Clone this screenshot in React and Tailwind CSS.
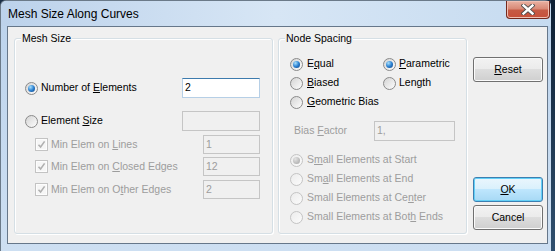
import React from "react";

function Radio({ checked, disabled }) {
  return (
    <span
      className={
        disabled
          ? "w-[13px] h-[13px] shrink-0 rounded-full border border-[#c4c4c4] bg-linear-to-br from-[#ececec] to-[#fbfbfb] flex items-center justify-center"
          : "w-[13px] h-[13px] shrink-0 rounded-full border border-[#8a8a8a] bg-linear-to-br from-[#d4d4d4] to-[#fdfdfd] flex items-center justify-center"
      }
    >
      {checked &&
        (disabled ? (
          <span className="w-[7px] h-[7px] rounded-full bg-radial-[at_35%_30%] from-[#e2e2e2] to-[#a3a3a3]" />
        ) : (
          <span className="w-[7px] h-[7px] rounded-full bg-radial-[at_35%_30%] from-[#a8e0fc] via-[#2d82d2] to-[#0b3c7c]" />
        ))}
    </span>
  );
}

function Check() {
  return (
    <span className="w-[13px] h-[13px] shrink-0 border border-[#c3c3c3] bg-[#f6f6f6] shadow-[inset_0_0_0_1px_#fdfdfd] flex items-center justify-center">
      <svg width="11" height="11" viewBox="0 0 11 11">
        <path d="M2.5 5.8 L4.6 8 L8.6 2.4" fill="none" stroke="#b0b0b0" strokeWidth="1.6" />
      </svg>
    </span>
  );
}

function Field({ value, disabled, w, h }) {
  return (
    <div
      className={
        disabled
          ? "shrink-0 border border-[#c5c5c5] bg-[#f0f0f0] text-[#9d9d9d] pl-[2px] flex items-center"
          : "shrink-0 border border-[#b6cfe6] border-t-[#3d7bad] bg-white text-black pl-[2px] flex items-center"
      }
      style={{ width: w, height: h }}
    >
      {value}
    </div>
  );
}

function Group({ label, className, children }) {
  return (
    <div className={"relative shrink-0 border border-[#d5dfe5] rounded-[3px] shadow-[inset_1px_1px_0_#fff,1px_1px_0_#fff] " + className}>
      <span className="absolute -top-[7px] left-[6px] px-[1px] bg-[#f0f0f0] leading-[13px]">{label}</span>
      {children}
    </div>
  );
}

function Button({ children, primary, className }) {
  return (
    <div
      className={
        (primary
          ? "border border-[#3c7fb1] bg-[linear-gradient(#eaf6fd_0%,#d9f0fc_49%,#bee6fd_50%,#a7d9f5_100%)] shadow-[inset_0_0_0_1px_#63d0f7] "
          : "border border-[#707070] bg-[linear-gradient(#f2f2f2_0%,#ebebeb_49%,#dddddd_50%,#cfcfcf_100%)] shadow-[inset_0_0_0_1px_#fbfbfb] ") +
        "w-[70px] h-[25px] rounded-[3px] flex items-center justify-center text-black " +
        className
      }
    >
      {children}
    </div>
  );
}

export default function App() {
  return (
    <div className="w-[555px] h-[251px] flex bg-[#1a2f47] overflow-hidden font-['Liberation_Sans',Arial,sans-serif] text-[10.5px] text-black">
      <div className="w-[551px] h-full flex flex-col border-l border-t border-[#6b7a89] rounded-tl-[6px] rounded-tr-[6px] bg-linear-to-b from-[#bcd3ec] to-[#cddff2]">
        {/* title bar */}
        <div className="h-[25px] flex items-start bg-linear-to-r from-[#bcd2eb] via-[#d7e6f5] to-[#c6dbf0] rounded-tl-[5px] rounded-tr-[5px]">
          <span className="pl-[7px] pt-[5px] text-[12px] leading-[16px]">Mesh Size Along Curves</span>
          <div className="ml-auto mr-[1px] w-[44px] h-[18px] rounded-b-[4px] border border-t-0 border-[#74291d] bg-[linear-gradient(#e9b2a3_0%,#d98a77_45%,#c65a44_55%,#c7503a_100%)] shadow-[inset_0_0_0_1px_#f0bfb2] flex items-center justify-center">
            <svg width="14" height="11" viewBox="0 0 14 11">
              <path d="M2.5 1.5 L11.5 9.5 M11.5 1.5 L2.5 9.5" stroke="#4a4a4a" strokeWidth="4.2" strokeLinecap="square" />
              <path d="M2.5 1.5 L11.5 9.5 M11.5 1.5 L2.5 9.5" stroke="#ffffff" strokeWidth="2.4" strokeLinecap="square" />
            </svg>
          </div>
        </div>

        {/* client area */}
        <div className="ml-[6px] w-[541px] h-[218px] border border-[#66778a] bg-[#f0f0f0] flex items-start pl-[6px] pt-[11px]">
          <Group label="Mesh Size" className="w-[259px] h-[196px] flex flex-col pt-[39px]">
            <div className="h-[20px] flex items-center pl-[10px]">
              <Radio checked />
              <span className="ml-[3px] w-[141px]">
                Number of <u>E</u>lements
              </span>
              <Field value="2" w={78} h={20} />
            </div>
            <div className="mt-[13px] h-[20px] flex items-center pl-[10px]">
              <Radio />
              <span className="ml-[3px] w-[141px]">
                Element <u>S</u>ize
              </span>
              <Field value="" disabled w={78} h={20} />
            </div>
            <div className="mt-[4px] h-[19px] flex items-center pl-[20px] text-[#9d9d9d]">
              <Check />
              <span className="ml-[3px] w-[152px]">
                Min Elem on <u>L</u>ines
              </span>
              <Field value="1" disabled w={57} h={19} />
            </div>
            <div className="mt-[3px] h-[19px] flex items-center pl-[20px] text-[#9d9d9d]">
              <Check />
              <span className="ml-[3px] w-[152px]">
                Min Elem on <u>C</u>losed Edges
              </span>
              <Field value="12" disabled w={57} h={19} />
            </div>
            <div className="mt-[4px] h-[19px] flex items-center pl-[20px] text-[#9d9d9d]">
              <Check />
              <span className="ml-[3px] w-[152px]">
                Min Elem on O<u>t</u>her Edges
              </span>
              <Field value="2" disabled w={57} h={19} />
            </div>
          </Group>

          <Group label="Node Spacing" className="ml-[5px] w-[189px] h-[196px] flex flex-col pt-[17px]">
            <div className="h-[16px] flex items-center pl-[11px]">
              <div className="w-[93px] flex items-center">
                <Radio checked />
                <span className="ml-[4px]">
                  E<u>q</u>ual
                </span>
              </div>
              <Radio checked />
              <span className="ml-[3px]">
                <u>P</u>arametric
              </span>
            </div>
            <div className="mt-[3px] h-[16px] flex items-center pl-[11px]">
              <div className="w-[93px] flex items-center">
                <Radio />
                <span className="ml-[4px]">
                  <u>B</u>iased
                </span>
              </div>
              <Radio />
              <span className="ml-[3px]">Length</span>
            </div>
            <div className="mt-[3px] h-[16px] flex items-center pl-[11px]">
              <Radio />
              <span className="ml-[4px]">
                <u>G</u>eometric Bias
              </span>
            </div>
            <div className="mt-[11px] h-[20px] flex items-center pl-[15px] text-[#9d9d9d]">
              <span className="w-[80px]">
                Bias <u>F</u>actor
              </span>
              <Field value="1," disabled w={81} h={20} />
            </div>
            <div className="mt-[11px] h-[16px] flex items-center pl-[11px] text-[#9d9d9d]">
              <Radio checked disabled />
              <span className="ml-[4px]">
                S<u>m</u>all Elements at Start
              </span>
            </div>
            <div className="mt-[3px] h-[16px] flex items-center pl-[11px] text-[#9d9d9d]">
              <Radio disabled />
              <span className="ml-[4px]">
                Sm<u>a</u>ll Elements at End
              </span>
            </div>
            <div className="mt-[3px] h-[16px] flex items-center pl-[11px] text-[#9d9d9d]">
              <Radio disabled />
              <span className="ml-[4px]">
                Small Elements at Ce<u>n</u>ter
              </span>
            </div>
            <div className="mt-[3px] h-[16px] flex items-center pl-[11px] text-[#9d9d9d]">
              <Radio disabled />
              <span className="ml-[4px]">
                Small Elements at Bot<u>h</u> Ends
              </span>
            </div>
          </Group>

          <div className="ml-[6px] mt-[19px] flex flex-col">
            <Button>
              <span>
                <u>R</u>eset
              </span>
            </Button>
            <Button primary className="mt-[95px]">
              <span>
                <u>O</u>K
              </span>
            </Button>
            <Button className="mt-[3px]">Cancel</Button>
          </div>
        </div>
      </div>
      <div className="w-[4px] h-full bg-linear-to-b from-[#0d1f33] to-[#30506f]" />
    </div>
  );
}
